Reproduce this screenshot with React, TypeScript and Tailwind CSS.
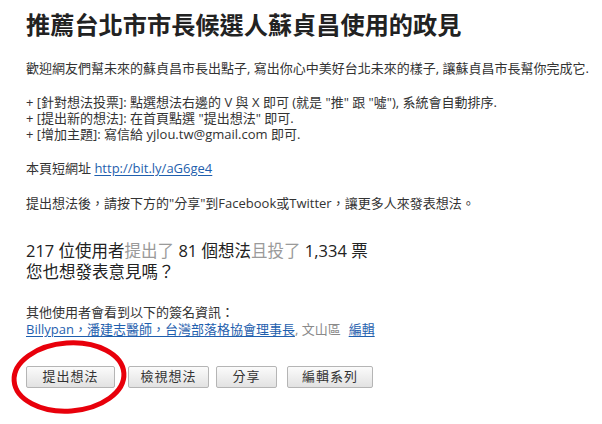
const FONT = { fontFamily: '"Open Sans", "Noto Sans CJK TC", sans-serif' };

const BUTTONS: { label: string; w: string; ml: string }[] = [
  { label: "提出想法", w: "w-[89px]", ml: "ml-0" },
  { label: "檢視想法", w: "w-[81px]", ml: "ml-[13px]" },
  { label: "分享", w: "w-[61px]", ml: "ml-[7px]" },
  { label: "編輯系列", w: "w-[86px]", ml: "ml-[10px]" },
];

export default function App() {
  return (
    <div
      className="relative h-[424px] w-[602px] overflow-hidden bg-white pl-[26px] pt-[10px] text-[#333]"
      style={FONT}
    >
      <h1 className="text-[24.2px] font-bold leading-[30px] text-[#222]">推薦台北市市長候選人蘇貞昌使用的政見</h1>

      <p className="mt-[20px] text-[13px] leading-[16px]">
        歡迎網友們幫未來的蘇貞昌市長出點子, 寫出你心中美好台北未來的樣子, 讓蘇貞昌市長幫你完成它.
      </p>

      <div className="mt-[18px] text-[13px] leading-[16px]">
        <p>+ [針對想法投票]: 點選想法右邊的 V 與 X 即可 (就是 "推" 跟 "噓"), 系統會自動排序.</p>
        <p>+ [提出新的想法]: 在首頁點選 "提出想法" 即可.</p>
        <p>+ [增加主題]: 寫信給 yjlou.tw@gmail.com 即可.</p>
      </div>

      <p className="mt-[18px] text-[13px] leading-[16px]">
        本頁短網址 <a className="text-[#1f5fae] underline underline-offset-2">http://bit.ly/aG6ge4</a>
      </p>

      <p className="mt-[19px] text-[13px] leading-[16px]">
        提出想法後，請按下方的"分享"到Facebook或Twitter，讓更多人來發表想法。
      </p>

      <div className="mt-[29px] text-[16.5px] leading-[21px] text-[#222]">
        <p>
          217 位使用者<span className="text-[#9a9a9a]">提出了</span> 81 個想法
          <span className="text-[#9a9a9a]">且投了</span> 1,334 票
        </p>
        <p>您也想發表意見嗎？</p>
      </div>

      <div className="mt-[22px] text-[13px] leading-[17px]">
        <p>其他使用者會看到以下的簽名資訊：</p>
        <p>
          <a className="text-[#1f5fae] underline underline-offset-2">Billypan，潘建志醫師，台灣部落格協會理事長</a>
          <span className="text-[#8a8a8a]">, 文山區</span>
          <a className="ml-[8px] text-[#1f5fae] underline underline-offset-2">編輯</a>
        </p>
      </div>

      <div className="mt-[28px] flex">
        {BUTTONS.map((b) => (
          <button
            key={b.label}
            className={`${b.w} ${b.ml} h-[22px] rounded-[2px] border border-[#b5b5b5] bg-gradient-to-b from-[#fbfbfb] to-[#e2e2e2] text-[13px] tracking-[1px] text-[#333]`}
          >
            {b.label}
          </button>
        ))}
      </div>

      {/* hand-drawn red circle around the first button */}
      <svg className="absolute left-[8px] top-[338px]" width="122" height="78" viewBox="0 0 122 78">
        <ellipse
          cx="61"
          cy="39"
          rx="55"
          ry="34"
          transform="rotate(-4 61 39)"
          fill="none"
          stroke="#e8000b"
          strokeWidth="5"
        />
      </svg>
    </div>
  );
}
